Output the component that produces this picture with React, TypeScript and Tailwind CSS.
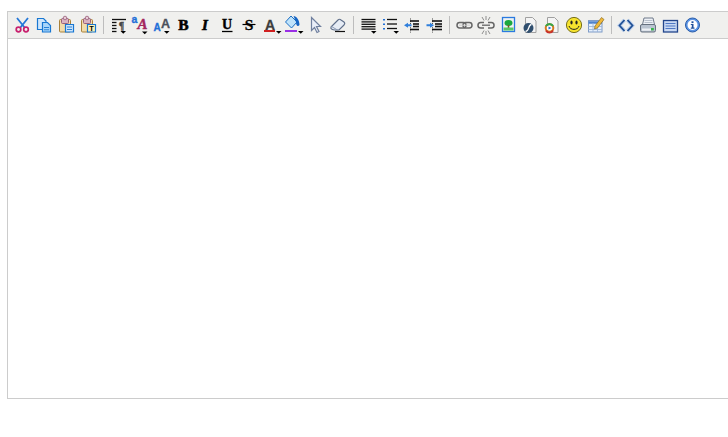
// Rich text editor toolbar over an empty edit area.
import type { ReactNode } from "react";

const Caret = ({ x = 16, y = 18 }: { x?: number; y?: number }) => (
  <path d={`M${x} ${y}h5.500l-2.750 2.750z`} fill="#000" />
);

const Lines = ({ x, y, w, n, gap = 3, h = 1.300, color = "#111" }: { x: number; y: number; w: number; n: number; gap?: number; h?: number; color?: string }) => (
  <g stroke={color} strokeWidth={h}>
    {Array.from({ length: n }).map((_, i) => (
      <path key={i} d={`M${x} ${y + i * gap}h${w}`} />
    ))}
  </g>
);

const Letter = ({ x, y, size, children, fill = "#000", italic = false, heavy = 0, font = "'Liberation Serif', serif" }: { x: number; y: number; size: number; children: ReactNode; fill?: string; italic?: boolean; heavy?: number; font?: string }) => (
  <text x={x} y={y} fontSize={size} fontWeight="700" fontStyle={italic ? "italic" : "normal"} fontFamily={font} fill={fill} stroke={heavy ? fill : "none"} strokeWidth={heavy} textAnchor="middle">
    {children}
  </text>
);

const Clipboard = ({ children }: { children: ReactNode }) => (
  <g>
    <rect x="4.500" y="6.500" width="11" height="12.500" rx="1" fill="#f2dcaa" stroke="#a9823a" />
    <rect x="6.500" y="5.500" width="7" height="5" rx="1" fill="#d9b3c2" stroke="#98607a" />
    <circle cx="10" cy="5" r="1.800" fill="#e6cbd6" stroke="#98607a" strokeWidth=".8" />
    {children}
  </g>
);

const SANS = "'Liberation Sans', sans-serif";

// each group: separator classes (none for the first) and its icons
const GROUPS: { sep: string; icons: ReactNode[] }[] = [
  {
    sep: "",
    icons: [
      // cut
      <g key="cut" fill="none">
        <path d="M6 5l8 10M17 5L9 15" stroke="#2277d8" strokeWidth="1.800" />
        <circle cx="7.500" cy="16.500" r="2.300" stroke="#c8206e" strokeWidth="1.700" />
        <circle cx="15" cy="16.500" r="2.300" stroke="#c8206e" strokeWidth="1.700" />
      </g>,
      // copy
      <g key="copy" fill="#cfe6fb" stroke="#1877d2" strokeWidth="1.200">
        <path d="M4.500 5.500h6l2.500 2.500v8.500H4.500z" />
        <path d="M9.500 9.500h5l3 3v6.500h-8z" fill="#a9d6fa" />
        <path d="M11 14.500h5M11 16.800h5" strokeWidth=".9" />
      </g>,
      // paste
      <g key="paste">
        <Clipboard>
          <path d="M10.500 11.500h8v7.500h-8z" fill="#cfe6fb" stroke="#1877d2" strokeWidth="1.200" />
          <path d="M12 14h5M12 16.500h5" stroke="#1877d2" strokeWidth=".9" />
        </Clipboard>
      </g>,
      // paste as text
      <g key="paste-text">
        <Clipboard>
          <path d="M10.500 11.500h8v7.500h-8z" fill="#fdf3b5" stroke="#1877d2" strokeWidth="1.200" />
          <Letter x={14.500} y={18} size={7.500} font={SANS}>T</Letter>
        </Clipboard>
      </g>,
    ],
  },
  {
    sep: "ml-1 mr-0.5",
    icons: [
      // styles
      <g key="styles">
        <Lines x={6} y={6.500} w={14} n={1} />
        <Lines x={6} y={9.500} w={4.500} n={4} gap={3} />
        <Letter x={15.500} y={16} size={10} heavy={0.3} fill="#444">¶</Letter>
        <Caret x={14.500} y={18} />
      </g>,
      // spell check
      <g key="spell">
        <Letter x={6.500} y={10} size={10.500} heavy={0.3} fill="#1f6fd8" font={SANS}>a</Letter>
        <Letter x={14.500} y={16} size={15} heavy={0.4} fill="#a3275e" italic>A</Letter>
        <Caret x={14} y={18.500} />
      </g>,
      // font size
      <g key="size">
        <Letter x={7} y={18} size={10} heavy={0.3} fill="#1f6fd8" font={SANS}>A</Letter>
        <Letter x={15.500} y={15} size={12.500} heavy={0.3} fill="#4a4f5a" font={SANS}>A</Letter>
        <Caret x={14} y={18} />
      </g>,
      <Letter key="b" x={11.500} y={17} size={15.500} heavy={0.6}>B</Letter>,
      <Letter key="i" x={11} y={16.500} size={15} heavy={0.6} italic>I</Letter>,
      <g key="u">
        <Letter x={11} y={16} size={14} heavy={0.4}>U</Letter>
        <path d="M6 18.500h10.500" stroke="#000" strokeWidth="1.300" />
      </g>,
      <g key="s">
        <Letter x={11} y={17} size={15.500} heavy={0.3}>S</Letter>
        <path d="M4.500 11.500h13" stroke="#000" strokeWidth="1.200" />
      </g>,
      // text colour
      <g key="color">
        <Letter x={10} y={16.500} size={14} heavy={0.3} fill="#3c3c3c" font={SANS}>A</Letter>
        <rect x="4" y="17" width="11" height="2" fill="#d02020" />
        <Caret x={16} y={18} />
      </g>,
      // highlight
      <g key="fill">
        <path d="M3.500 9l5.500-6 6 6-5.500 6z" fill="#bfe3fb" stroke="#1c6fc4" />
        <path d="M11.500 3c3 0 6 4 6 9-1.500 2-3.500 1-3.500-3z" fill="#1565c4" />
        <rect x="3" y="17" width="12" height="2" fill="#9a2fe6" />
        <Caret x={16} y={18} />
      </g>,
      // pointer
      <path key="pointer" d="M7.500 4.500v13l3-3 2.500 5 2-1-2.500-5h4z" fill="#e9eef8" stroke="#6f7f9e" strokeWidth="1.200" />,
      // eraser
      <g key="eraser">
        <path d="M5 14l7-7c1-1 2-1 3 0l3 2c1 1 1 2 0 3l-5 5H9c-2 0-5-1-4-3z" fill="#e6ecf5" stroke="#5f6f8a" strokeWidth="1.100" />
        <path d="M5.500 13.500l6 3.500" stroke="#8b9bb5" />
        <path d="M9 18.500h10" stroke="#111" strokeWidth="1.200" />
      </g>,
    ],
  },
  {
    sep: "ml-[5px] mr-[3px]",
    icons: [
      // justify
      <g key="align">
        <Lines x={4.500} y={6.500} w={14} n={5} gap={2.400} />
        <Caret x={14} y={18} />
      </g>,
      // list
      <g key="list">
        <path d="M5 6v1.500M5 10.500v1.500M5 15v1.500" stroke="#1f6fd8" strokeWidth="2" />
        <Lines x={8} y={6.500} w={10} n={3} gap={4.500} />
        <Caret x={14.500} y={18} />
      </g>,
      // outdent
      <g key="outdent">
        <Lines x={9} y={8} w={9} n={1} h={1.600} />
        <Lines x={12} y={11} w={6} n={2} gap={2.500} h={1.600} />
        <Lines x={9} y={16.500} w={9} n={1} h={1.600} />
        <path d="M9.500 5.500v14" stroke="#111" strokeWidth=".8" strokeDasharray="1 1.200" />
        <path d="M3 12.200l4-2.500v1.500h3.500v2H7v1.500z" fill="#2f7fdc" />
      </g>,
      // indent
      <g key="indent">
        <Lines x={9} y={8} w={10} n={1} h={1.600} />
        <Lines x={12} y={11} w={7} n={2} gap={2.500} h={1.600} />
        <Lines x={9} y={16.500} w={10} n={1} h={1.600} />
        <path d="M9.500 5.500v14" stroke="#111" strokeWidth=".8" strokeDasharray="1 1.200" />
        <path d="M11 12.200l-4-2.500v1.500H3.500v2H7v1.500z" fill="#2f7fdc" />
      </g>,
    ],
  },
  {
    sep: "ml-1 mr-[3px]",
    icons: [
      // link
      <g key="link" fill="none">
        <rect x="4" y="9.500" width="9" height="5.500" rx="2.700" stroke="#666" strokeWidth="1.500" />
        <rect x="10" y="9.500" width="9" height="5.500" rx="2.700" stroke="#666" strokeWidth="1.500" />
        <path d="M6 12.200h11" stroke="#ccc" />
      </g>,
      // unlink
      <g key="unlink" fill="none" stroke="#666">
        <path d="M9 9.500H5.700a2.700 2.700 0 000 5.500H9M13 9.500h3.300a2.700 2.700 0 010 5.500H13" strokeWidth="1.500" />
        <path d="M7 12.200h8" strokeWidth="1.300" />
        <path d="M7 4l2 3.500M15 4l-2 3.500M11 3v4M7 21l2-3.500M15 21l-2-3.500M11 22v-4" strokeWidth=".7" />
      </g>,
      // image
      <g key="image">
        <rect x="5.500" y="4.500" width="12" height="14" fill="#eef2f2" stroke="#2a7ae0" strokeWidth="1.300" />
        <ellipse cx="11.500" cy="10" rx="4" ry="3" fill="#1aa83e" />
        <path d="M10.700 12h1.600v3h-1.600z" fill="#7a5a22" />
        <path d="M6.500 14.500h10v3h-10z" fill="#58c868" />
      </g>,
      // flash
      <g key="flash">
        <path d="M6.500 4.500h7l3.500 3.500v11.500H6.500z" fill="#f4f4f4" stroke="#a0a0a0" />
        <circle cx="9.500" cy="15" r="5" fill="#2f4e6e" />
        <path d="M12.500 11.500c-3.500 0-2 7-6 7" stroke="#fff" strokeWidth="1.300" fill="none" />
      </g>,
      // media
      <g key="media">
        <path d="M6.500 4.500h7l3.500 3.500v11.500H6.500z" fill="#f4f4f4" stroke="#a0a0a0" />
        <circle cx="8.500" cy="15" r="3.800" fill="#fff" stroke="#d8781e" strokeWidth="2" />
        <path d="M5 13a4 4 0 017 0" stroke="#2fa84a" strokeWidth="2" fill="none" />
        <path d="M5 17.500a4 4 0 007 0" stroke="#c8302a" strokeWidth="1.800" fill="none" />
        <path d="M7.500 13.500l3 1.500-3 1.500z" fill="#1f6fd8" />
      </g>,
      // smiley
      <g key="smile">
        <circle cx="11" cy="12" r="7.600" fill="#f6e32e" stroke="#77701a" />
        <ellipse cx="8.500" cy="9.500" rx="1.100" ry="2" fill="#222" />
        <ellipse cx="13.500" cy="9.500" rx="1.100" ry="2" fill="#222" />
        <path d="M6 13c1 4.500 9 4.500 10 0" fill="none" stroke="#222" />
      </g>,
      // table with pencil
      <g key="table">
        <rect x="3.500" y="7.500" width="13.500" height="11.500" fill="#e4eefb" stroke="#7f9cc8" />
        <path d="M3.500 9.500h13.500" stroke="#4f82cc" strokeWidth="2.500" />
        <path d="M3.500 13.500h13.500M3.500 16.500h13.500M8 10v9M12.500 10v9" stroke="#9db5d8" strokeWidth=".9" />
        <path d="M10 13l6.500-8.500 2.500 2-6.500 8.500-3 1z" fill="#f0b93a" stroke="#8a6a20" strokeWidth=".7" />
      </g>,
    ],
  },
  {
    sep: "ml-1 mr-[3px]",
    icons: [
      // source
      <g key="code" fill="none">
        <path d="M9.500 7l-5 5.500 5 5.500M12.500 7l5 5.500-5 5.500" stroke="#b9cdea" strokeWidth="3.600" />
        <path d="M9.500 7l-5 5.500 5 5.500M12.500 7l5 5.500-5 5.500" stroke="#1f4f94" strokeWidth="1.700" />
      </g>,
      // print
      <g key="print">
        <path d="M7 5h9l1.500 6.500H5.500z" fill="#eef1f6" stroke="#6f7a8a" />
        <path d="M7.500 7.500h8M7.500 9.500h8" stroke="#aab4c2" strokeWidth=".8" />
        <rect x="3.500" y="11.500" width="15" height="7.500" rx="1.500" fill="#b9c3d0" stroke="#66717f" />
        <rect x="5" y="15.500" width="9" height="2.200" fill="#eef1f5" />
        <rect x="14" y="15" width="2.800" height="2.400" fill="#35b548" />
      </g>,
      // preview
      <g key="preview">
        <rect x="4.500" y="7.500" width="14" height="11.500" fill="#c9d9f3" stroke="#23468c" strokeWidth="1.300" />
        <path d="M6.500 10.500h10M6.500 13h10M6.500 15.500h10" stroke="#4f78c4" strokeWidth="1.200" />
      </g>,
      // about
      <g key="info">
        <circle cx="11.500" cy="12" r="7" fill="#5a93e4" stroke="#2a5ca8" />
        <circle cx="11.500" cy="12" r="5" fill="#fff" />
        <rect x="10.500" y="8.300" width="2" height="1.800" fill="#1f4f9c" />
        <path d="M9.800 11h2.700v3.600h1v1.100H9.800v-1.100h1v-2.500h-1z" fill="#1f4f9c" />
      </g>,
    ],
  },
];

export default function App() {
  return (
    <div className="h-[437px] w-[728px] overflow-hidden bg-white pl-[7px] pt-[11px] font-['Liberation_Sans',sans-serif]">
      <div className="-mr-4 flex h-[388px] flex-col border border-[#ccc]">
        <div className="flex h-[27px] items-center border-b border-[#ccc] bg-[#f0f0ee] pl-[3px]">
          {GROUPS.map(({ sep, icons }, g) => (
            <div key={g} className="flex items-center">
              {sep && <span className={`h-[18px] w-px bg-[#bdbdbd] ${sep}`} />}
              {icons.map((icon, i) => (
                <svg key={i} viewBox="0 0 22 24" className="h-6 w-[22px] shrink-0">
                  {icon}
                </svg>
              ))}
            </div>
          ))}
        </div>
        <div className="flex-1 bg-white" />
      </div>
    </div>
  );
}
